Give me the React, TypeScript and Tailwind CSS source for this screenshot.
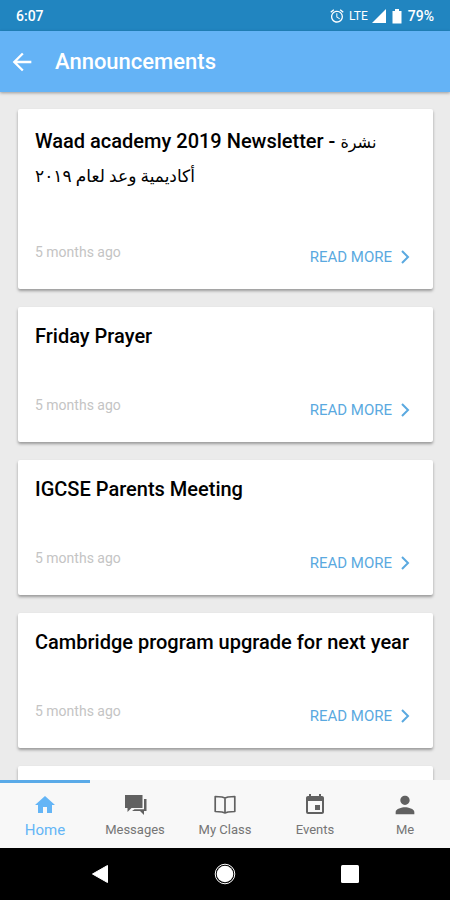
import type { ReactNode } from "react"
import { MdAlarm, MdArrowBack, MdEvent, MdHome, MdPerson } from "react-icons/md"

interface Announcement {
  title: string
  arabicTitle?: [string, string]
  age: string
}

interface TabProps {
  label: string
  icon: ReactNode
  active?: boolean
}

const announcements: Announcement[] = [
  {
    title: "Waad academy 2019 Newsletter - ",
    arabicTitle: ["نشرة", "أكاديمية وعد لعام ٢٠١٩"],
    age: "5 months ago"
  },
  { title: "Friday Prayer", age: "5 months ago" },
  { title: "IGCSE Parents Meeting", age: "5 months ago" },
  { title: "Cambridge program upgrade for next year", age: "5 months ago" }
]

function StatusBar() {
  return (
    <div className="flex h-[31px] shrink-0 items-center justify-between bg-[#2185c0] px-4 text-white">
      <span className="text-sm font-medium">6:07</span>

      <div className="flex items-center gap-1">
        <MdAlarm className="size-4" />
        <span className="text-xs">LTE</span>
        <svg viewBox="0 0 14 14" className="size-3.5" fill="currentColor">
          <path d="M14 0v14H0z" />
        </svg>
        <svg viewBox="0 0 14 16" className="h-4 w-3.5" fill="currentColor">
          <path d="M5 1h4v2h2.500v12.500H2.500V3H5z" />
        </svg>
        <span className="text-sm font-medium">79%</span>
      </div>
    </div>
  )
}

function AnnouncementCard({ title, arabicTitle, age }: Announcement) {
  return (
    <article
      className={
        arabicTitle
          ? "flex min-h-[180px] shrink-0 flex-col rounded-xs bg-white px-[17px] pt-[15px] pb-5 shadow-[0_2px_3px_rgba(0,0,0,0.35)]"
          : "flex min-h-[135px] shrink-0 flex-col rounded-xs bg-white px-[17px] pt-[15px] pb-5 shadow-[0_2px_3px_rgba(0,0,0,0.35)]"
      }
    >
      <h2
        className={
          arabicTitle
            ? "text-xl leading-[34px] font-medium text-black"
            : "text-xl leading-7 font-medium text-black"
        }
      >
        {title}
        {arabicTitle && (
          <>
            <span className="text-base">{arabicTitle[0]}</span>
            <br />
            <span className="text-[17px]">{arabicTitle[1]}</span>
          </>
        )}
      </h2>

      <div className="mt-auto flex items-start justify-between pr-1.5">
        <time className="pt-px text-sm leading-5 text-[#c4c4c4]">{age}</time>

        <button type="button" className="flex items-center gap-2 pt-1 text-[15px] leading-6 text-[#5aa9e0]">
          READ MORE
          <svg viewBox="0 0 10 14" className="h-3.5 w-2.5" fill="none" stroke="currentColor" strokeWidth="2">
            <path d="M2 1l6 6-6 6" />
          </svg>
        </button>
      </div>
    </article>
  )
}

function Tab({ label, icon, active }: TabProps) {
  return (
    <button
      type="button"
      aria-current={active ? "page" : undefined}
      className={
        active
          ? "flex flex-1 flex-col items-center border-t-3 border-[#5aaae8] pt-2.5 text-[15px] leading-[26px] text-[#64b5f6]"
          : "flex flex-1 flex-col items-center border-t-3 border-transparent pt-2.5 text-[13px] leading-[26px] text-[#757575]"
      }
    >
      {icon}
      {label}
    </button>
  )
}

function ChatIcon() {
  return (
    <svg viewBox="0 0 24 24" className="size-6 text-[#616161]" fill="currentColor">
      <path d="M2 2h17.500v13H8.500L4.500 19v-4H2z" />
      <path d="M21 6h2.500v12H21v4l-4-4H9l2.500-1.800H21z" />
    </svg>
  )
}

function BookIcon() {
  return (
    <svg viewBox="0 0 24 24" className="size-6 text-[#616161]" fill="none" stroke="currentColor" strokeWidth="1.700">
      <path d="M12 5L9 4 2.200 3.500v15L9 19l3 1 3-1 6.800-.5v-15L15 4zM12 5v15" strokeLinejoin="round" />
    </svg>
  )
}

function SystemNav() {
  return (
    <div className="grid h-[52px] shrink-0 grid-cols-3 items-center justify-items-center bg-black px-[37px] text-white">
      <button type="button" aria-label="Back">
        <svg viewBox="0 0 18 20" className="h-5 w-[18px]" fill="currentColor">
          <path d="M16.500 1.500v17L1.500 10z" stroke="currentColor" strokeLinejoin="round" />
        </svg>
      </button>
      <button type="button" aria-label="Device home">
        <svg viewBox="0 0 22 22" className="size-[22px]">
          <circle cx="11" cy="11" r="9.800" fill="none" stroke="currentColor" strokeWidth="1" />
          <circle cx="11" cy="11" r="8.300" fill="currentColor" />
        </svg>
      </button>
      <button type="button" aria-label="Recent apps">
        <svg viewBox="0 0 18 18" className="size-[18px]" fill="currentColor">
          <rect width="18" height="18" rx="1.500" />
        </svg>
      </button>
    </div>
  )
}

export default function App() {
  return (
    <div className="flex h-screen flex-col overflow-hidden bg-[#ebebeb] font-['Roboto','DejaVu_Sans',sans-serif]">
      <StatusBar />

      <header className="z-10 flex h-[61px] shrink-0 items-center gap-[19px] bg-[#64b3f6] px-2 text-white shadow-[0_1px_3px_rgba(0,0,0,0.35)]">
        <button type="button" aria-label="Go back">
          <MdArrowBack className="size-7" />
        </button>
        <h1 className="text-[22px] font-medium">Announcements</h1>
      </header>

      <main className="flex min-h-0 flex-1 flex-col gap-[18px] overflow-hidden pt-[17px] pr-[17px] pl-[18px]">
        {announcements.map((item) => (
          <AnnouncementCard key={item.title} {...item} />
        ))}
        <div className="h-[135px] shrink-0 rounded-xs bg-white shadow-[0_2px_3px_rgba(0,0,0,0.35)]" />
      </main>

      <nav className="flex h-[68px] shrink-0 bg-[#f8f8f8]">
        <Tab label="Home" icon={<MdHome className="size-6" />} active />
        <Tab label="Messages" icon={<ChatIcon />} />
        <Tab label="My Class" icon={<BookIcon />} />
        <Tab label="Events" icon={<MdEvent className="size-6 text-[#616161]" />} />
        <Tab label="Me" icon={<MdPerson className="-my-0.5 size-7 text-[#616161]" />} />
      </nav>

      <SystemNav />
    </div>
  )
}
